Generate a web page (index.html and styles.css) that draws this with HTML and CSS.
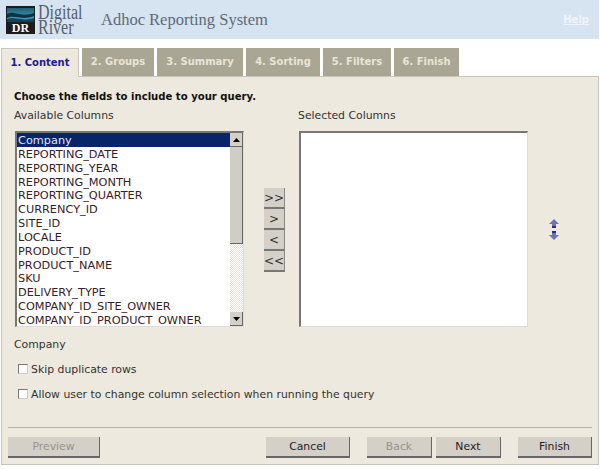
FILE: index.html
```html
<!DOCTYPE html>
<html>
<head>
    <link rel="stylesheet" href="styles.css">
</head>
<body>
<div class="header">
    <div class="logo">
        <svg class="logoMark" width="29" height="28" viewBox="0 0 29 28">
            <defs>
                <linearGradient id="wave" x1="0" y1="0" x2="0" y2="1">
                    <stop offset="0" stop-color="#1a5f78"/>
                    <stop offset="1" stop-color="#4fb3c4"/>
                </linearGradient>
            </defs>
            <rect width="29" height="28" fill="#1c1c1c"/>
            <rect x="1" y="2" width="27" height="14" fill="url(#wave)"/>
            <path d="M1 8 C8 4 14 12 28 7 L28 10 C16 15 8 8 1 12 Z" fill="#0f3244"/>
            <path d="M1 13 C8 10 16 16 28 12 L28 16 L1 16 Z" fill="#14445a"/>
            <text x="14.5" y="26" class="logoDR">DR</text>
        </svg>
        <div class="logoName"><span>Digital</span><span>River</span></div>
    </div>
    <div class="appTitle">Adhoc Reporting System</div>
    <a class="helpLink" href="#">Help</a>
</div>

<div class="tabs">
    <div class="tab active">1. Content</div>
    <div class="tab t2">2. Groups</div>
    <div class="tab t3">3. Summary</div>
    <div class="tab t4">4. Sorting</div>
    <div class="tab t5">5. Filters</div>
    <div class="tab t6">6. Finish</div>
</div>

<div class="panel">
    <h1 class="lead">Choose the fields to include to your query.</h1>
    <div class="pickers">
        <div class="col">
            <div class="colLabel">Available Columns</div>
            <div class="listbox">
                <div class="items">
                    <div class="item selected">Company</div>
                    <div class="item">REPORTING_DATE</div>
                    <div class="item">REPORTING_YEAR</div>
                    <div class="item">REPORTING_MONTH</div>
                    <div class="item">REPORTING_QUARTER</div>
                    <div class="item">CURRENCY_ID</div>
                    <div class="item">SITE_ID</div>
                    <div class="item">LOCALE</div>
                    <div class="item">PRODUCT_ID</div>
                    <div class="item">PRODUCT_NAME</div>
                    <div class="item">SKU</div>
                    <div class="item">DELIVERY_TYPE</div>
                    <div class="item">COMPANY_ID_SITE_OWNER</div>
                    <div class="item">COMPANY_ID_PRODUCT_OWNER</div>
                </div>
                <div class="scrollbar">
                    <div class="scrollBtn"><svg width="7" height="4" viewBox="0 0 7 4"><path d="M3.5 0 L7 4 L0 4 Z" fill="#000"/></svg></div>
                    <div class="thumb"></div>
                    <div class="track"></div>
                    <div class="scrollBtn"><svg width="7" height="4" viewBox="0 0 7 4"><path d="M0 0 L7 0 L3.5 4 Z" fill="#000"/></svg></div>
                </div>
            </div>
        </div>
        <div class="moveBtns">
            <div class="moveBtn">&gt;&gt;</div>
            <div class="moveBtn">&gt;</div>
            <div class="moveBtn">&lt;</div>
            <div class="moveBtn">&lt;&lt;</div>
        </div>
        <div class="col">
            <div class="colLabel">Selected Columns</div>
            <div class="listbox empty"></div>
        </div>
        <div class="orderBtns">
            <svg width="10" height="9" viewBox="0 0 10 9"><path d="M5 0 L10 5 L7 5 L7 9 L3 9 L3 5 L0 5 Z" fill="#6a72b8"/><path d="M3 7 H7 V9 H3 Z" fill="#2a3080"/></svg>
            <svg width="10" height="9" viewBox="0 0 10 9"><path d="M5 9 L10 4 L7 4 L7 0 L3 0 L3 4 L0 4 Z" fill="#6a72b8"/><path d="M3 0 H7 V2 H3 Z" fill="#2a3080"/></svg>
        </div>
    </div>
    <div class="currentField">Company</div>
    <label class="check first"><span class="box"></span>Skip duplicate rows</label>
    <label class="check"><span class="box"></span>Allow user to change column selection when running the query</label>
    <div class="actions">
        <div class="btn wPreview disabled">Preview</div>
        <div class="spacer"></div>
        <div class="btn wCancel">Cancel</div>
        <div class="btn wSmall gapBack disabled">Back</div>
        <div class="btn wSmall gapNext">Next</div>
        <div class="btn wFinish gapFinish">Finish</div>
    </div>
</div>
</body>
</html>
```

FILE: styles.css
```css
body {
    margin: 0;
    background: #fff;
    font-family: "DejaVu Sans", Verdana, sans-serif;
    font-size: 10.85px;
    color: #222;
}

.header {
    display: flex;
    align-items: center;
    width: 599px;
    height: 39px;
    background: #d6e3f0;
}

.logo {
    display: flex;
    align-items: center;
    margin-left: 6px;
    width: 95px;
}

.logoDR {
    font-family: "Liberation Serif", serif;
    font-size: 12px;
    font-weight: bold;
    fill: #fff;
    text-anchor: middle;
}

.logoName {
    display: flex;
    flex-direction: column;
    margin-left: 3px;
    font-family: "Liberation Serif", serif;
    font-size: 20px;
    line-height: 15px;
    color: #56606c;
    transform: scaleX(.8);
    transform-origin: left;
}

.appTitle {
    font-family: "Liberation Serif", serif;
    font-size: 16.5px;
    color: #5d6b78;
}

.helpLink {
    margin-left: auto;
    margin-right: 10px;
    font-size: 10px;
    font-weight: bold;
    color: #f0f4f8;
}

.tabs {
    display: flex;
    gap: 3px;
    margin: 9px 0 0 1px;
    height: 28px;
}

.tab {
    box-sizing: border-box;
    height: 28px;
    padding-top: 8px;
    text-align: center;
    font-size: 10px;
    font-weight: bold;
    color: #e8e4d8;
    background: #aaa694;
}

.tab.active {
    width: 78px;
    height: 29px;
    color: #1c1c8c;
    background: #ede9de;
    border: 1px solid #c8c6ba;
    border-bottom: none;
    position: relative;
    z-index: 1;
}

.t2 { width: 72px; }
.t3 { width: 86px; }
.t4 { width: 74px; }
.t5 { width: 68px; }
.t6 { width: 65px; }

.panel {
    box-sizing: border-box;
    width: 598px;
    height: 389px;
    margin-left: 1px;
    padding: 13px 5px 0 5px;
    background: #ede9de;
    border: 1px solid #c8c6ba;
}

.lead {
    margin: 0 0 0 7px;
    font-size: 10.1px;
    line-height: 14px;
    color: #111;
}

.pickers {
    display: flex;
    margin: 5px 0 0 7px;
}

.colLabel {
    height: 16px;
    line-height: 14px;
    margin-bottom: 6px;
    color: #333;
}

.listbox {
    box-sizing: border-box;
    display: flex;
    width: 229px;
    height: 196px;
    margin-left: 1px;
    background: #fff;
    border: solid #777;
    border-right-color: #ddd;
    border-bottom-color: #ddd;
    border-width: 2px 1px 1px 2px;
}

.items {
    flex: 1;
    overflow: hidden;
}

.item {
    height: 13.85px;
    line-height: 15.5px;
    padding-left: 1px;
    font-size: 11.3px;
    white-space: nowrap;
    color: #3a2028;
}

.item.selected {
    background: #0a246a;
    color: #dfe6f5;
}

.scrollbar {
    display: flex;
    flex-direction: column;
    width: 13px;
    background: #d4d0c8;
}

.scrollBtn {
    display: flex;
    align-items: center;
    justify-content: center;
    height: 14px;
    background: #d4d0c8;
    border-right: 1px solid #666;
    border-bottom: 1px solid #666;
    box-sizing: border-box;
}

.thumb {
    height: 97px;
    background: #d0cdc5;
    border-right: 1px solid #666;
    border-bottom: 1px solid #666;
    box-sizing: border-box;
}

.track {
    flex: 1;
    background: repeating-conic-gradient(#e4e2da 0 25%, #fff 0 50%) 0 0 / 2px 2px;
}

.moveBtns {
    display: flex;
    flex-direction: column;
    margin: 79px 13px 0 20px;
}

.moveBtn {
    box-sizing: border-box;
    width: 21px;
    height: 21px;
    line-height: 20px;
    text-align: center;
    font-size: 12px;
    color: #333;
    background: #d4d0c8;
    border-right: 1px solid #888;
    border-bottom: 2px solid #777;
}

.orderBtns {
    display: flex;
    flex-direction: column;
    gap: 3px;
    margin: 110px 0 0 21px;
}

.currentField {
    margin: 11px 0 0 7px;
    line-height: 14px;
    color: #333;
}

.check {
    display: flex;
    align-items: center;
    height: 14px;
    margin: 11px 0 0 11px;
    color: #333;
}

.check.first {
    margin-top: 10px;
}

.box {
    box-sizing: border-box;
    width: 10px;
    height: 10px;
    margin-right: 3px;
    background: #fff;
    border: 1px solid #777;
    border-right-color: #ccc;
    border-bottom-color: #ccc;
}

.actions {
    display: flex;
    margin: 26px 0 0 1px;
    padding-top: 9px;
    width: 584px;
    border-top: 1px solid #b5b2a6;
}

.spacer {
    flex: 1;
}

.btn {
    box-sizing: border-box;
    height: 21px;
    line-height: 20px;
    text-align: center;
    color: #222;
    background: #d4d0c8;
    border-right: 1px solid #666;
    border-bottom: 2px solid #666;
}

.btn.disabled {
    color: #97948c;
}

.wPreview { width: 92px; }
.wCancel { width: 84px; }
.wSmall { width: 65px; }
.wFinish { width: 74px; }
.gapBack { margin-left: 17px; }
.gapNext { margin-left: 4px; }
.gapFinish { margin-left: 17px; }
```
